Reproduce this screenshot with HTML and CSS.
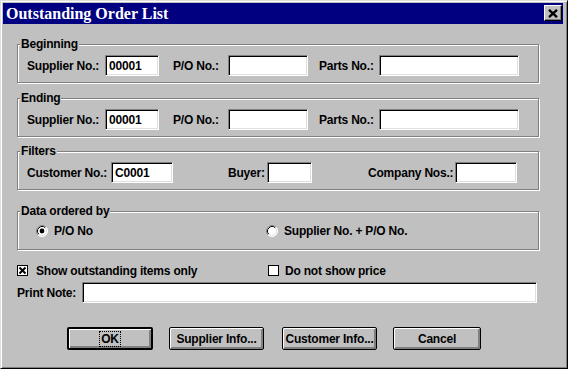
FILE: index.html
```html
<!DOCTYPE html>
<html>
<head>
<meta charset="utf-8">
<title>Outstanding Order List</title>
<link rel="stylesheet" href="styles.css">
</head>
<body>
<div class="window">
  <div class="titlebar">
    <span class="title">Outstanding Order List</span>
    <button class="close" type="button" aria-label="Close">
      <svg width="10" height="9" viewBox="0 0 10 9"><path d="M1 0.8 L9 8.2 M9 0.8 L1 8.2" stroke="#000" stroke-width="2.3" fill="none"/></svg>
    </button>
  </div>
  <div class="content">
    <fieldset class="group g-begin">
      <legend>Beginning</legend>
      <div class="row">
        <label class="field fa"><span class="lbl">Supplier No.:</span><input class="edit w-sup" type="text" value="00001"></label>
        <label class="field fb"><span class="lbl">P/O No.:</span><input class="edit w-po" type="text" value=""></label>
        <label class="field fc"><span class="lbl">Parts No.:</span><input class="edit w-parts" type="text" value=""></label>
      </div>
    </fieldset>
    <fieldset class="group g-end">
      <legend>Ending</legend>
      <div class="row">
        <label class="field fa"><span class="lbl">Supplier No.:</span><input class="edit w-sup" type="text" value="00001"></label>
        <label class="field fb"><span class="lbl">P/O No.:</span><input class="edit w-po" type="text" value=""></label>
        <label class="field fc"><span class="lbl">Parts No.:</span><input class="edit w-parts" type="text" value=""></label>
      </div>
    </fieldset>
    <fieldset class="group g-filt">
      <legend>Filters</legend>
      <div class="row">
        <label class="field fd"><span class="lbl">Customer No.:</span><input class="edit w-cust" type="text" value="C0001"></label>
        <label class="field fe"><span class="lbl">Buyer:</span><input class="edit w-buyer" type="text" value=""></label>
        <label class="field ff"><span class="lbl">Company Nos.:</span><input class="edit w-comp" type="text" value=""></label>
      </div>
    </fieldset>
    <fieldset class="group g-data">
      <legend>Data ordered by</legend>
      <div class="radios">
        <div class="opt opt1">
          <svg class="radio" width="12" height="12" viewBox="0 0 12 12">
            <circle cx="6" cy="6" r="5.5" fill="#fff"/>
            <path d="M2.11 9.89 A5.5 5.5 0 0 1 9.89 2.11" stroke="#808080" fill="none"/>
            <path d="M9.89 2.11 A5.5 5.5 0 0 1 2.11 9.89" stroke="#fff" fill="none"/>
            <path d="M2.82 9.18 A4.5 4.5 0 0 1 9.18 2.82" stroke="#000" fill="none"/>
            <path d="M9.18 2.82 A4.5 4.5 0 0 1 2.82 9.18" stroke="#dfdfdf" fill="none"/>
            <circle cx="6" cy="6" r="2.4" fill="#000"/>
          </svg>
          <span>P/O No</span>
        </div>
        <div class="opt opt2">
          <svg class="radio" width="12" height="12" viewBox="0 0 12 12">
            <circle cx="6" cy="6" r="5.5" fill="#fff"/>
            <path d="M2.11 9.89 A5.5 5.5 0 0 1 9.89 2.11" stroke="#808080" fill="none"/>
            <path d="M9.89 2.11 A5.5 5.5 0 0 1 2.11 9.89" stroke="#fff" fill="none"/>
            <path d="M2.82 9.18 A4.5 4.5 0 0 1 9.18 2.82" stroke="#000" fill="none"/>
            <path d="M9.18 2.82 A4.5 4.5 0 0 1 2.82 9.18" stroke="#dfdfdf" fill="none"/>
          </svg>
          <span>Supplier No. + P/O No.</span>
        </div>
      </div>
    </fieldset>
    <div class="checks">
      <div class="chk chk1">
        <svg class="box" width="11" height="11" viewBox="0 0 11 11">
          <rect x="0.5" y="0.5" width="10" height="10" fill="#fff" stroke="#000"/>
          <path d="M2.5 2.5 L8.5 8.5 M8.5 2.5 L2.5 8.5" stroke="#000" stroke-width="2"/>
        </svg>
        <span>Show outstanding items only</span>
      </div>
      <div class="chk chk2">
        <svg class="box" width="11" height="11" viewBox="0 0 11 11">
          <rect x="0.5" y="0.5" width="10" height="10" fill="#fff" stroke="#000"/>
        </svg>
        <span>Do not show price</span>
      </div>
    </div>
    <label class="note">
      <span class="note-lbl">Print Note:</span>
      <input class="edit w-note" type="text" value="">
    </label>
    <div class="buttons">
      <button class="btn btn-ok" type="button"><span class="focus">OK</span></button>
      <button class="btn btn-sup" type="button">Supplier Info...</button>
      <button class="btn btn-cust" type="button">Customer Info...</button>
      <button class="btn btn-cancel" type="button">Cancel</button>
    </div>
  </div>
</div>
</body>
</html>
```
FILE: styles.css
```css
html, body {
  margin: 0;
  padding: 0;
  background: #c0c0c0;
}
body {
  font-family: "Liberation Sans", Arial, sans-serif;
  font-size: 12px;
  font-weight: bold;
  letter-spacing: -0.2px;
  color: #000;
}
.window {
  width: 568px;
  height: 369px;
  box-sizing: border-box;
  border: 1px solid;
  border-color: #dfdfdf #000 #000 #dfdfdf;
  box-shadow: inset 1px 1px 0 #fff, inset -1px -1px 0 #808080;
  padding: 2px;
  background: #c0c0c0;
  overflow: hidden;
}
.titlebar {
  display: flex;
  align-items: flex-start;
  height: 21px;
  margin-right: 2px;
  background: #000080;
  color: #fff;
}
.title {
  font-family: "Liberation Serif", "Times New Roman", serif;
  font-weight: bold;
  font-size: 16px;
  letter-spacing: 0;
  line-height: 21px;
  padding-left: 3px;
  white-space: nowrap;
}
.close {
  margin: 2px 1px 0 auto;
  width: 18px;
  height: 16px;
  padding: 0;
  box-sizing: border-box;
  background: #c0c0c0;
  border: 1px solid;
  border-color: #fff #000 #000 #fff;
  box-shadow: inset -1px -1px 0 #808080;
  display: flex;
  align-items: center;
  justify-content: center;
}
.close svg { display: block; }

.content {
  padding: 13px 0 0 14px;
}
.group {
  width: 522px;
  box-sizing: border-box;
  min-width: 0;
  margin: 0;
  padding: 3px 0 6px 0;
  border: 1px solid #808080;
  box-shadow: 1px 1px 0 #fff, inset 1px 1px 0 #fff;
}
.group legend {
  margin-left: 2px;
  padding: 0 1px;
  font-size: 12px;
  line-height: 15px;
  background: #c0c0c0;
}
.g-end { margin-top: 8px; }
.g-filt { margin-top: 7px; }
.g-data { margin-top: 14px; padding-bottom: 10px; }

.row {
  display: flex;
  height: 21px;
}
.field {
  display: flex;
  align-items: center;
  box-sizing: border-box;
  height: 21px;
}
.lbl {
  flex: 1;
  white-space: nowrap;
}
.fa { width: 141px; padding-left: 9px; }
.fb { width: 149px; padding-left: 14px; }
.fc { width: 211px; padding-left: 11px; }
.fd { width: 155px; padding-left: 9px; }
.fe { width: 139px; padding-left: 55px; }
.ff { width: 205px; padding-left: 56px; }

.edit {
  box-sizing: border-box;
  height: 21px;
  margin: 0;
  padding: 0 2px 0 3px;
  background: #fff;
  border: 1px solid;
  border-color: #808080 #fff #fff #808080;
  box-shadow: inset 1px 1px 0 #000, inset -1px -1px 0 #dfdfdf;
  font-family: "Liberation Sans", Arial, sans-serif;
  font-size: 12px;
  font-weight: bold;
  letter-spacing: -0.2px;
  color: #000;
  outline: none;
  flex: none;
}
.w-sup { width: 54px; }
.w-po { width: 80px; }
.w-parts { width: 140px; }
.w-cust { width: 62px; }
.w-buyer { width: 45px; }
.w-comp { width: 62px; }
.w-note { width: 455px; }

.radios {
  display: flex;
  align-items: center;
  height: 17px;
  padding-left: 18px;
}
.opt {
  display: flex;
  align-items: center;
  gap: 6px;
  white-space: nowrap;
}
.opt1 { width: 230px; }
.radio { display: block; flex: none; }

.checks {
  display: flex;
  align-items: center;
  height: 15px;
  margin-top: 13px;
}
.chk {
  display: flex;
  align-items: center;
  gap: 8px;
  white-space: nowrap;
}
.chk1 { width: 251px; }
.chk2 { gap: 6px; }
.box { display: block; flex: none; }

.note {
  display: flex;
  align-items: center;
  margin-top: 4px;
  height: 21px;
}
.note-lbl { width: 65px; white-space: nowrap; }

.buttons {
  display: flex;
  margin-top: 24px;
  padding-left: 50px;
}
.btn {
  box-sizing: border-box;
  height: 23px;
  margin: 0;
  padding: 0;
  background: #c0c0c0;
  border: 1px solid #000;
  border-radius: 2px;
  box-shadow: inset 1px 1px 0 #fff, inset -1px -1px 0 #808080, inset -2px -2px 0 #808080;
  font-family: "Liberation Sans", Arial, sans-serif;
  font-size: 12px;
  font-weight: bold;
  letter-spacing: -0.2px;
  color: #000;
  line-height: 14px;
  white-space: nowrap;
}
.btn-ok {
  width: 86px;
  border-width: 2px;
}
.btn-sup { width: 95px; margin-left: 16px; }
.btn-cust { width: 95px; margin-left: 18px; }
.btn-cancel { width: 88px; margin-left: 16px; }
.focus {
  display: inline-block;
  border: 1px dotted #000;
  padding: 0 1px;
  line-height: 14px;
}
```
